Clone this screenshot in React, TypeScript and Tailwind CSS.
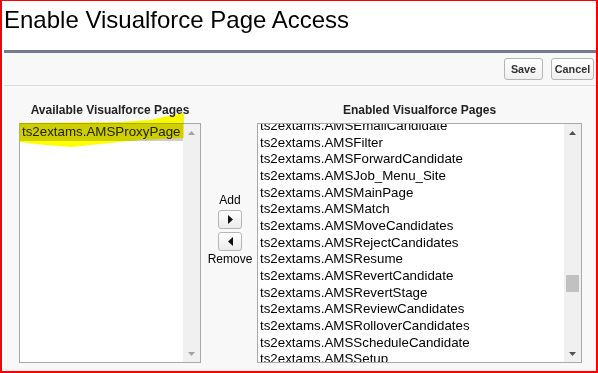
const AVAILABLE = ["ts2extams.AMSProxyPage"];

const ENABLED = [
  "ts2extams.AMSEmailCandidate",
  "ts2extams.AMSFilter",
  "ts2extams.AMSForwardCandidate",
  "ts2extams.AMSJob_Menu_Site",
  "ts2extams.AMSMainPage",
  "ts2extams.AMSMatch",
  "ts2extams.AMSMoveCandidates",
  "ts2extams.AMSRejectCandidates",
  "ts2extams.AMSResume",
  "ts2extams.AMSRevertCandidate",
  "ts2extams.AMSRevertStage",
  "ts2extams.AMSReviewCandidates",
  "ts2extams.AMSRolloverCandidates",
  "ts2extams.AMSScheduleCandidate",
  "ts2extams.AMSSetup",
];

function Arrow({ dir, color }: { dir: "up" | "down"; color: string }) {
  return (
    <svg width="7" height="4" viewBox="0 0 7 4">
      <polygon points={dir === "up" ? "0,4 7,4 3.5,0" : "0,0 7,0 3.5,4"} fill={color} />
    </svg>
  );
}

function Scrollbar({ active }: { active: boolean }) {
  const color = active ? "#505050" : "#a3a3a3";
  return (
    <div className="flex w-[17px] flex-col bg-[#f0f0f0]">
      <div className="flex h-[17px] items-center justify-center">
        <Arrow dir="up" color={color} />
      </div>
      <div className="flex-1">
        {active && <div className="mx-auto mt-[134px] h-[17px] w-[13px] bg-[#c1c1c1]" />}
      </div>
      <div className="flex h-[17px] items-center justify-center">
        <Arrow dir="down" color={color} />
      </div>
    </div>
  );
}

function ListBox({
  items,
  selected,
  offset,
  active,
}: {
  items: string[];
  selected?: number;
  offset?: string;
  active: boolean;
}) {
  return (
    <div className="flex h-[240px] border border-[#a9a9a9] bg-white">
      <div className="flex-1 overflow-hidden text-[13.33px] leading-[16.67px] text-black">
        <div className={offset}>
          {items.map((item, i) => (
            <div
              key={item}
              className={`whitespace-nowrap pl-[2px] ${i === selected ? "bg-[#cecece] text-[#222]" : ""}`}
            >
              {item}
            </div>
          ))}
        </div>
      </div>
      <Scrollbar active={active} />
    </div>
  );
}

function MoveButton({ dir }: { dir: "right" | "left" }) {
  return (
    <button className="flex h-[19px] w-[24px] items-center justify-center rounded-[3px] border border-[#b5b5b5] bg-linear-to-b from-white to-[#ececec]">
      <svg width="5" height="9" viewBox="0 0 5 9">
        <polygon points={dir === "right" ? "0,0 5,4.5 0,9" : "5,0 0,4.5 5,9"} fill="#111" />
      </svg>
    </button>
  );
}

export default function App() {
  return (
    <div className="relative flex h-[373px] w-[598px] flex-col overflow-hidden border-t border-r-2 border-b-2 border-l-2 border-[#ff0000] bg-white font-['Liberation_Sans',Arial,sans-serif]">
      <h1 className="h-[49px] shrink-0 pt-[5px] pl-[2px] text-[24px] leading-[28px] font-normal text-black">
        Enable Visualforce Page Access
      </h1>

      <div className="ml-[2px] flex flex-1 flex-col bg-[#f8f8f8]">
        <div className="h-[3px] bg-[#747c94]" />

        {/* button row */}
        <div className="flex h-[33px] justify-end gap-[8px] border-b border-[#dddddd] pt-[5px] pr-[2px]">
          <button className="h-[22px] w-[39px] rounded-[3px] border border-[#b5b5b5] bg-linear-to-b from-white to-[#f0f0f0] text-[10.8px] font-bold text-[#333]">
            Save
          </button>
          <button className="h-[22px] w-[43px] rounded-[3px] border border-[#b5b5b5] bg-linear-to-b from-white to-[#f0f0f0] text-[10.8px] font-bold text-[#333]">
            Cancel
          </button>
        </div>

        {/* dueling picklists */}
        <div className="flex pt-[17px] pl-[15px]">
          <div className="w-[182px]">
            <div className="mb-[6px] text-center text-[12px] leading-[14px] font-bold text-[#222]">
              Available Visualforce Pages
            </div>
            <ListBox items={AVAILABLE} selected={0} active={false} />
          </div>

          <div className="flex w-[56px] flex-col items-center pt-[90px] pl-[2px] text-[12px] leading-[14px] text-black">
            <span>Add</span>
            <div className="mt-[3px]">
              <MoveButton dir="right" />
            </div>
            <div className="mt-[3px]">
              <MoveButton dir="left" />
            </div>
            <span className="mt-[1px]">Remove</span>
          </div>

          <div className="w-[325px]">
            <div className="mb-[6px] text-center text-[12px] leading-[14px] font-bold text-[#222]">
              Enabled Visualforce Pages
            </div>
            <ListBox items={ENABLED} offset="-mt-[6px]" active />
          </div>
        </div>
      </div>

      {/* highlighter mark over the selected page */}
      <svg
        className="pointer-events-none absolute -top-[1px] -left-[2px] mix-blend-multiply"
        width="598"
        height="373"
        viewBox="0 0 598 373"
      >
        <polygon
          points="20,123 120,122 150,120 168,116 184,113 184,138 140,140 100,144 72,147 45,145 20,142"
          fill="#ffff00"
        />
      </svg>
    </div>
  );
}
